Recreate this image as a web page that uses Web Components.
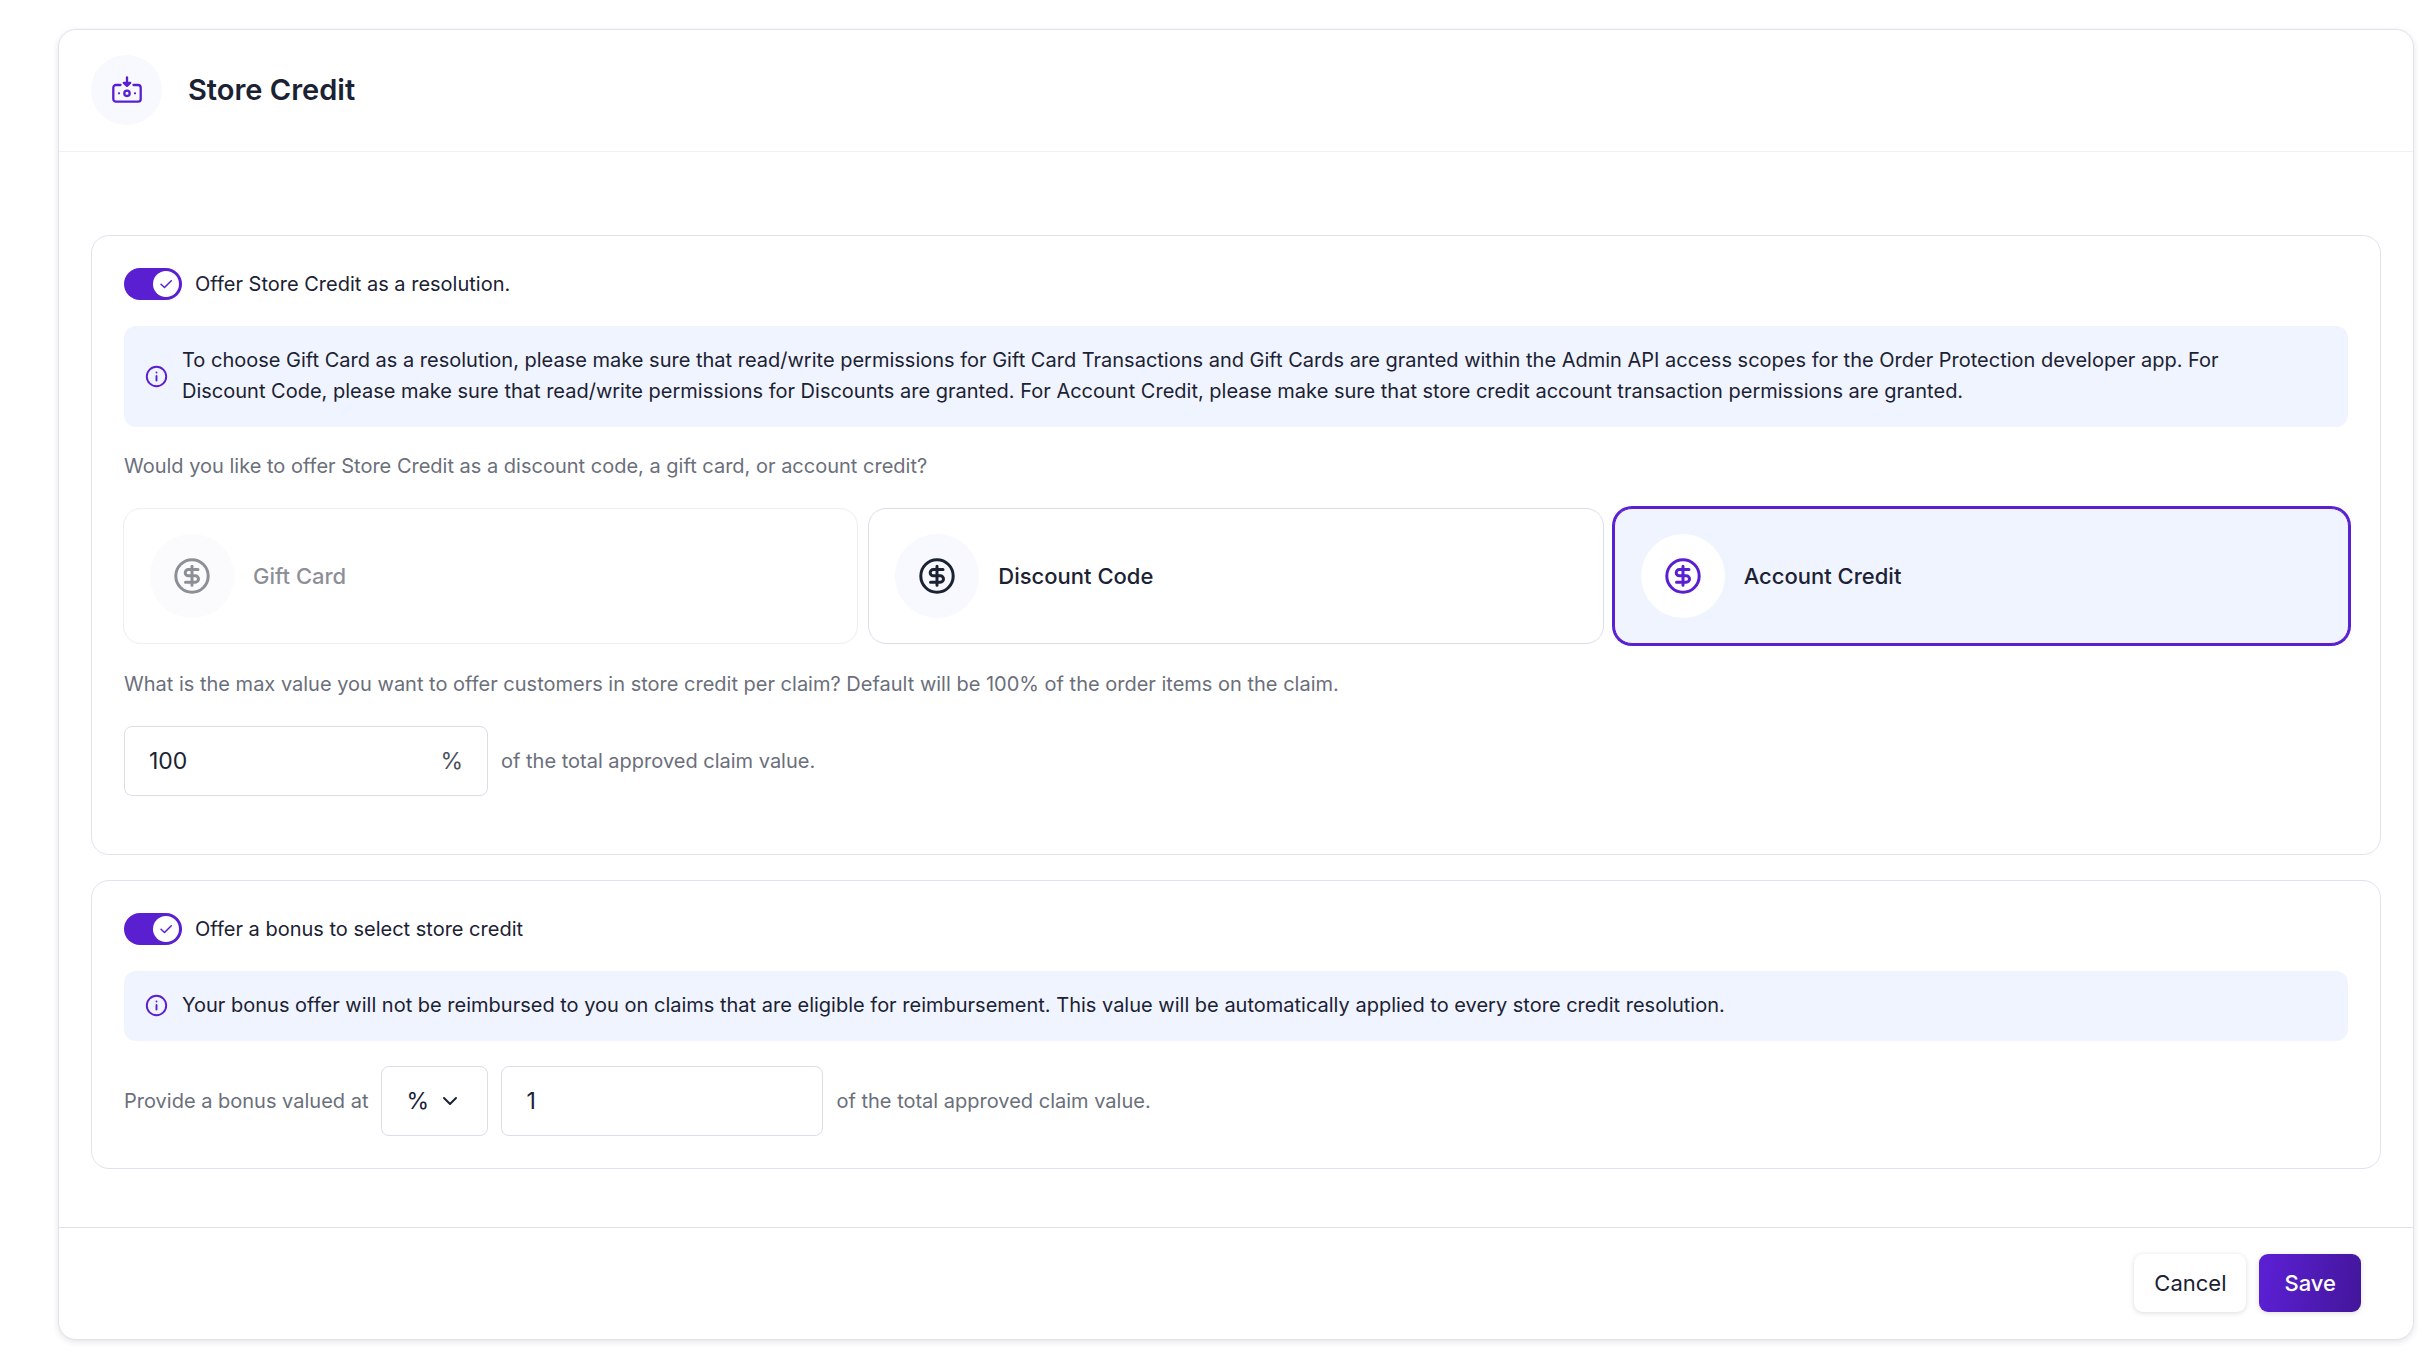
<!DOCTYPE html>
<html lang="en">
<head>
<meta charset="utf-8">
<meta name="viewport" content="width=device-width, initial-scale=1">
<title>Store Credit</title>
<style>
  :root {
    --purple: #5a1fd1;
    --ink: #1b2233;
    --muted: #6b6f7b;
    --line: #e0e3ee;
    --tint: #f0f4ff;
    --soft: #f8f9fe;
  }
  body {
    margin: 0;
    padding: 29px 20px 14px 58px;
    background: #fff;
    color: var(--ink);
    font-family: Inter, "Liberation Sans", sans-serif;
    font-size: 20px;
    line-height: 31px;
  }
</style>
</head>
<body>
<settings-card>
  <span slot="title">Store Credit</span>
  <settings-section class="tall">
    <toggle-switch>Offer Store Credit as a resolution.</toggle-switch>
    <info-alert>To choose Gift Card as a resolution, please make sure that read/write permissions for Gift Card Transactions and Gift Cards are granted within the Admin API access scopes for the Order Protection developer app. For Discount Code, please make sure that read/write permissions for Discounts are granted. For Account Credit, please make sure that store credit account transaction permissions are granted.</info-alert>
    <credit-options>Would you like to offer Store Credit as a discount code, a gift card, or account credit?</credit-options>
    <max-value>What is the max value you want to offer customers in store credit per claim? Default will be 100% of the order items on the claim.</max-value>
  </settings-section>
  <settings-section>
    <toggle-switch>Offer a bonus to select store credit</toggle-switch>
    <info-alert>Your bonus offer will not be reimbursed to you on claims that are eligible for reimbursement. This value will be automatically applied to every store credit resolution.</info-alert>
    <bonus-value></bonus-value>
  </settings-section>
  <action-button slot="actions">Cancel</action-button>
  <action-button slot="actions" primary>Save</action-button>
</settings-card>

<script>
class SettingsCard extends HTMLElement {
  constructor() {
    super();
    this.shadowDOM = this.attachShadow({ mode: "open" });
  }
  connectedCallback() {
    this.shadowDOM.innerHTML = `
    <style>
    :host {
      display: block;
      border: 1px solid var(--line);
      border-radius: 18px;
      box-shadow: 0 2px 6px rgba(27, 34, 51, 0.12);
      background: #fff;
    }
    header {
      display: flex;
      align-items: center;
      gap: 26px;
      padding: 25px 32px 26px;
      border-bottom: 1px solid #f0f1f5;
    }
    .icon {
      display: grid;
      place-items: center;
      width: 71px;
      height: 70px;
      border-radius: 50%;
      background: var(--soft);
    }
    h1 {
      margin: 0;
      font-size: 29px;
      font-weight: 600;
      line-height: 36px;
    }
    main {
      display: flex;
      flex-direction: column;
      gap: 25px;
      padding: 83px 32px 58px;
    }
    footer {
      display: flex;
      justify-content: flex-end;
      gap: 13px;
      padding: 26px 52px 27px 32px;
      border-top: 1px solid var(--line);
    }
    </style>
    <header>
      <div class="icon">
        <svg width="30" height="28" viewBox="0 0 30 28" fill="none" stroke="#5a1fd1" stroke-width="2.3" stroke-linecap="round" stroke-linejoin="round">
          <path d="M8.5 9H4a2.7 2.7 0 0 0-2.7 2.7V23A2.7 2.7 0 0 0 4 25.7h22a2.7 2.7 0 0 0 2.7-2.7V11.7A2.7 2.7 0 0 0 26 9h-4.5"/>
          <path d="M15 1.5v7.5"/>
          <path d="M11.8 6.8h6.4L15 9.8z" fill="#5a1fd1"/>
          <circle cx="15" cy="17.3" r="2.7"/>
          <path d="M7 17.3h.01M23 17.3h.01"/>
        </svg>
      </div>
      <h1><slot name="title"></slot></h1>
    </header>
    <main><slot></slot></main>
    <footer><slot name="actions"></slot></footer>
    `;
  }
}

class SettingsSection extends HTMLElement {
  constructor() {
    super();
    this.shadowDOM = this.attachShadow({ mode: "open" });
  }
  connectedCallback() {
    this.shadowDOM.innerHTML = `
    <style>
    :host {
      display: block;
      padding: 32px;
      border: 1px solid var(--line);
      border-radius: 18px;
    }
    :host(.tall) { padding-bottom: 58px; }
    </style>
    <slot></slot>
    `;
  }
}

class ToggleSwitch extends HTMLElement {
  constructor() {
    super();
    this.shadowDOM = this.attachShadow({ mode: "open" });
  }
  connectedCallback() {
    this.shadowDOM.innerHTML = `
    <style>
    :host { display: block; }
    label {
      display: flex;
      align-items: center;
      gap: 13px;
      width: fit-content;
      height: 32px;
    }
    .control { display: grid; }
    .control > * { grid-area: 1 / 1; }
    input {
      appearance: none;
      width: 58px;
      height: 32px;
      margin: 0;
      border-radius: 16px;
      background: #c9ccd6;
    }
    input:checked { background: var(--purple); }
    svg {
      align-self: center;
      justify-self: start;
      margin-left: 3px;
      pointer-events: none;
    }
    input:checked + svg {
      justify-self: end;
      margin-right: 3px;
    }
    </style>
    <label>
      <span class="control">
        <input type="checkbox" role="switch" checked>
        <svg width="26" height="26" viewBox="0 0 26 26" fill="none">
          <circle cx="13" cy="13" r="13" fill="#fff"/>
          <path d="M8 13.2l3.5 3.3L18.3 9.7" stroke="#5a1fd1" stroke-width="1.5" stroke-linecap="round" stroke-linejoin="round"/>
        </svg>
      </span>
      <slot></slot>
    </label>
    `;
  }
}

class InfoAlert extends HTMLElement {
  constructor() {
    super();
    this.shadowDOM = this.attachShadow({ mode: "open" });
  }
  connectedCallback() {
    this.shadowDOM.innerHTML = `
    <style>
    :host {
      display: flex;
      align-items: center;
      gap: 14px;
      margin-top: 26px;
      padding: 19px 58px 20px 21px;
      border-radius: 12px;
      background: var(--tint);
    }
    svg { flex: none; }
    </style>
    <svg width="23" height="23" viewBox="0 0 23 23" fill="none" stroke="#5a1fd1" stroke-width="1.9" stroke-linecap="round">
      <circle cx="11.5" cy="11.5" r="9.7"/>
      <path d="M11.5 11v4.6M11.5 7.4v.1"/>
    </svg>
    <span><slot></slot></span>
    `;
  }
}

class CreditOptions extends HTMLElement {
  constructor() {
    super();
    this.shadowDOM = this.attachShadow({ mode: "open" });
  }
  option(name, state) {
    return `
      <label>
        <input type="radio" name="credit" ${state}>
        <span class="icon">
          <svg width="36" height="36" viewBox="0 0 36 36" fill="none" stroke="currentColor" stroke-width="3" stroke-linecap="round" stroke-linejoin="round">
            <circle cx="18" cy="18" r="16.2"/>
            <path d="M24 11.6H14.3a3.1 3.1 0 0 0 0 6.2h7a3.2 3.2 0 0 1 0 6.4H11.5M18 8.3v18.9"/>
          </svg>
        </span>
        <span>${name}</span>
      </label>`;
  }
  connectedCallback() {
    this.shadowDOM.innerHTML = `
    <style>
    :host { display: block; }
    fieldset {
      margin: 0;
      padding: 0;
      border: 0;
      min-width: 0;
    }
    legend {
      padding: 24px 0 26px;
      color: var(--muted);
    }
    .options {
      display: grid;
      grid-template-columns: repeat(3, 1fr);
      gap: 10px;
      margin: 0 -1px;
    }
    label {
      display: flex;
      align-items: center;
      gap: 19px;
      padding: 25px 26px;
      border: 1px solid #d9deea;
      border-radius: 18px;
      font-size: 22px;
      font-weight: 500;
    }
    input {
      appearance: none;
      position: absolute;
      margin: 0;
    }
    .icon {
      display: grid;
      place-items: center;
      width: 84px;
      height: 84px;
      border-radius: 50%;
      background: var(--soft);
    }
    label:has(:disabled) { opacity: 0.5; }
    label:has(:checked) {
      border-color: var(--purple);
      box-shadow: 0 0 0 2px var(--purple);
      background: var(--tint);
    }
    :checked + .icon {
      background: #fff;
      color: var(--purple);
    }
    </style>
    <fieldset>
      <legend><slot></slot></legend>
      <div class="options">
        ${this.option("Gift Card", "disabled")}
        ${this.option("Discount Code", "")}
        ${this.option("Account Credit", "checked")}
      </div>
    </fieldset>
    `;
  }
}

// shared by the two rows that hold text fields
const fieldStyles = `
    :host { display: block; color: var(--muted); }
    .row {
      display: flex;
      align-items: center;
      gap: 13px;
    }
    .box {
      box-sizing: border-box;
      display: flex;
      align-items: center;
      height: 70px;
      padding: 0 24px;
      border: 1px solid #d9deea;
      border-radius: 8px;
      font-size: 23px;
    }
    input, select {
      appearance: none;
      min-width: 0;
      margin: 0;
      padding: 0;
      border: 0;
      outline: 0;
      background: none;
      color: var(--ink);
      font: inherit;
    }
    input { flex: 1; }
`;

class MaxValue extends HTMLElement {
  constructor() {
    super();
    this.shadowDOM = this.attachShadow({ mode: "open" });
  }
  connectedCallback() {
    this.shadowDOM.innerHTML = `
    <style>
    ${fieldStyles}
    .question {
      display: block;
      padding: 25px 0 26px;
    }
    .box { width: 364px; }
    .box span { color: #4b5060; }
    </style>
    <label class="question" for="max"><slot></slot></label>
    <div class="row">
      <div class="box"><input id="max" type="text" value="100"><span>%</span></div>
      <span>of the total approved claim value.</span>
    </div>
    `;
  }
}

class BonusValue extends HTMLElement {
  constructor() {
    super();
    this.shadowDOM = this.attachShadow({ mode: "open" });
  }
  connectedCallback() {
    this.shadowDOM.innerHTML = `
    <style>
    ${fieldStyles}
    :host { margin-top: 25px; }
    .unit { width: 107px; color: var(--ink); }
    .unit select { width: 36px; }
    .amount { width: 322px; }
    </style>
    <div class="row">
      <label for="unit">Provide a bonus valued at</label>
      <div class="box unit">
        <select id="unit"><option>%</option><option>$</option></select>
        <svg width="16" height="16" viewBox="0 0 16 16" fill="none" stroke="currentColor" stroke-width="2" stroke-linecap="round" stroke-linejoin="round"><path d="M2 5l6 6 6-6"/></svg>
      </div>
      <div class="box amount"><input id="amount" type="text" value="1"></div>
      <label for="amount">of the total approved claim value.</label>
    </div>
    `;
  }
}

class ActionButton extends HTMLElement {
  constructor() {
    super();
    this.shadowDOM = this.attachShadow({ mode: "open" });
  }
  connectedCallback() {
    this.shadowDOM.innerHTML = `
    <style>
    :host { display: block; }
    button {
      height: 58px;
      padding: 0 20px;
      border: 0;
      border-radius: 9px;
      background: #fff;
      box-shadow: 0 1px 5px rgba(27, 34, 51, 0.16);
      color: var(--ink);
      font: inherit;
      font-size: 22px;
    }
    :host([primary]) button {
      padding: 0 25px;
      background: linear-gradient(100deg, #5a1fd1 10%, #43169a);
      color: #fff;
      font-weight: 500;
    }
    </style>
    <button type="button"><slot></slot></button>
    `;
  }
}

customElements.define("settings-card", SettingsCard);
customElements.define("settings-section", SettingsSection);
customElements.define("toggle-switch", ToggleSwitch);
customElements.define("info-alert", InfoAlert);
customElements.define("credit-options", CreditOptions);
customElements.define("max-value", MaxValue);
customElements.define("bonus-value", BonusValue);
customElements.define("action-button", ActionButton);
</script>
</body>
</html>
